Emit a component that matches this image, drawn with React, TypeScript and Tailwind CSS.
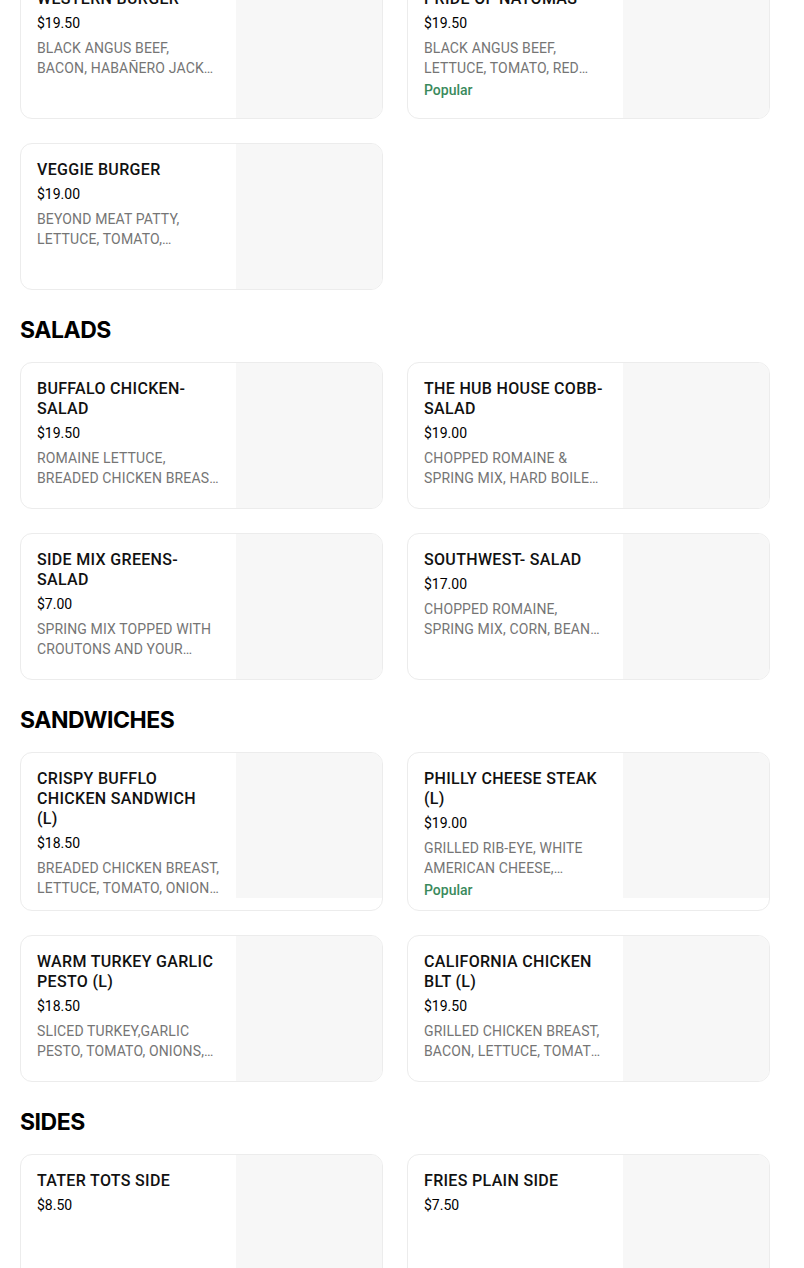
type Item = {
  name: string
  price: string
  desc?: string
  popular?: boolean
}

type Section = {
  title?: string
  items: Item[]
}

const sections: Section[] = [
  {
    items: [
      { name: 'WESTERN BURGER', price: '$19.50', desc: 'BLACK ANGUS BEEF, BACON, HABAÑERO JACK CHEESE, ONION RINGS, BBQ SAUCE' },
      { name: 'PRIDE OF NATOMAS', price: '$19.50', desc: 'BLACK ANGUS BEEF, LETTUCE, TOMATO, RED ONION, PICKLES, CHEDDAR', popular: true },
      { name: 'VEGGIE BURGER', price: '$19.00', desc: 'BEYOND MEAT PATTY, LETTUCE, TOMATO, CARAMELIZED ONIONS, PICKLES' },
    ],
  },
  {
    title: 'SALADS',
    items: [
      { name: 'BUFFALO CHICKEN- SALAD', price: '$19.50', desc: 'ROMAINE LETTUCE, BREADED CHICKEN BREAST, BUFFALO SAUCE, RANCH' },
      { name: 'THE HUB HOUSE COBB- SALAD', price: '$19.00', desc: 'CHOPPED ROMAINE & SPRING MIX, HARD BOILED EGG, BACON, AVOCADO' },
      { name: 'SIDE MIX GREENS- SALAD', price: '$7.00', desc: 'SPRING MIX TOPPED WITH CROUTONS AND YOUR CHOICE OF DRESSING' },
      { name: 'SOUTHWEST- SALAD', price: '$17.00', desc: 'CHOPPED ROMAINE, SPRING MIX, CORN, BEANS, SALSA, TORTILLA STRIPS' },
    ],
  },
  {
    title: 'SANDWICHES',
    items: [
      { name: 'CRISPY BUFFLO CHICKEN SANDWICH (L)', price: '$18.50', desc: 'BREADED CHICKEN BREAST, LETTUCE, TOMATO, ONION, BUFFALO SAUCE' },
      { name: 'PHILLY CHEESE STEAK (L)', price: '$19.00', desc: 'GRILLED RIB-EYE, WHITE AMERICAN CHEESE, ONIONS, PEPPERS', popular: true },
      { name: 'WARM TURKEY GARLIC PESTO (L)', price: '$18.50', desc: 'SLICED TURKEY,GARLIC PESTO, TOMATO, ONIONS, PROVOLONE CHEESE' },
      { name: 'CALIFORNIA CHICKEN BLT (L)', price: '$19.50', desc: 'GRILLED CHICKEN BREAST, BACON, LETTUCE, TOMATO, AVOCADO' },
    ],
  },
  {
    title: 'SIDES',
    items: [
      { name: 'TATER TOTS SIDE', price: '$8.50' },
      { name: 'FRIES PLAIN SIDE', price: '$7.50' },
    ],
  },
]

function ItemCard({ item }: { item: Item }) {
  return (
    <div className="flex min-h-[147px] overflow-hidden rounded-xl border border-[#ececec] bg-white">
      <div className="flex-1 min-w-0 px-4 pt-4 pb-[10px]">
        <div className="text-[16px] leading-5 font-medium tracking-[0.02em] text-[#111]">{item.name}</div>
        <div className="mt-[4px] text-[14px] leading-5 text-black">{item.price}</div>
        {item.desc && (
          <div className="mt-[5px] text-[14px] leading-5 tracking-[0.01em] text-[#757575] line-clamp-2">
            {item.desc}
          </div>
        )}
        {item.popular && (
          <div className="mt-[2px] text-[14px] leading-5 font-medium text-[#3a8a5c]">Popular</div>
        )}
      </div>
      <div className="w-[146px] h-[145px] shrink-0 bg-[#f7f7f7]" />
    </div>
  )
}

export default function App() {
  return (
    <div
      className="min-h-screen bg-white px-5 pb-10"
      style={{ fontFamily: 'Roboto, "Liberation Sans", Arial, sans-serif' }}
    >
      {sections.map((s, i) => (
        <div key={i}>
          {s.title ? (
            <h2 className="mt-6 mb-4 text-[23px] leading-8 font-bold tracking-[-0.02em] text-black font-[Inter,sans-serif]">
              {s.title}
            </h2>
          ) : (
            <div className="-mt-[28px]" />
          )}
          <div className="grid grid-cols-[363px_363px] gap-6">
            {s.items.map((item) => (
              <ItemCard key={item.name} item={item} />
            ))}
          </div>
        </div>
      ))}
    </div>
  )
}
